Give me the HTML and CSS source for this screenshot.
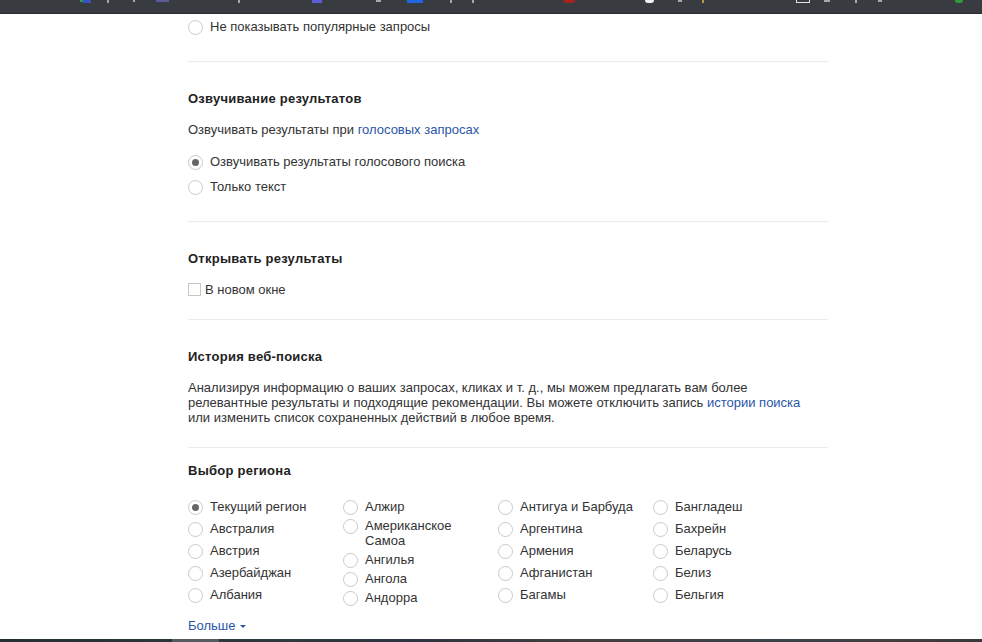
FILE: index.html
```html
<!DOCTYPE html>
<html lang="ru">
<head>
<meta charset="utf-8">
<title>Настройки поиска</title>
<link rel="stylesheet" href="styles.css">
</head>
<body>
<header class="topbar">
  <span class="frag f-green"></span><span class="frag f-blue1"></span><span class="frag f-t1"></span><span class="frag f-t2"></span>
  <span class="frag f-purple"></span><span class="frag f-t3"></span><span class="frag f-blue2"></span><span class="frag f-t4"></span>
  <span class="frag f-blue3"></span><span class="frag f-t5"></span><span class="frag f-t6"></span><span class="frag f-red"></span>
  <span class="frag f-white"></span><span class="frag f-t7"></span><span class="frag f-yellow"></span><span class="frag f-rect"></span>
  <span class="frag f-t8"></span><span class="frag f-t9"></span><span class="frag f-t10"></span><span class="frag f-green2"></span>
</header>
<main class="page">
  <section class="sec sec-first">
    <label class="opt"><span class="radio"></span>Не показывать популярные запросы</label>
  </section>
  <section class="sec sec-voice">
    <h2 class="title">Озвучивание результатов</h2>
    <p class="desc">Озвучивать результаты при <a class="link">голосовых запросах</a></p>
    <div class="stack">
      <label class="opt"><span class="radio on"></span>Озвучивать результаты голосового поиска</label>
      <label class="opt"><span class="radio"></span>Только текст</label>
    </div>
  </section>
  <section class="sec sec-open">
    <h2 class="title">Открывать результаты</h2>
    <label class="opt chk"><span class="box"></span>В новом окне</label>
  </section>
  <section class="sec sec-hist">
    <h2 class="title">История веб-поиска</h2>
    <p class="para">Анализируя информацию о ваших запросах, кликах и т. д., мы можем предлагать вам более релевантные результаты и подходящие рекомендации. Вы можете отключить запись <a class="link">истории поиска</a> или изменить список сохраненных действий в любое время.</p>
  </section>
  <section class="sec sec-region">
    <h2 class="title">Выбор региона</h2>
    <div class="regions">
      <div class="col col-a">
        <label class="reg"><span class="radio on"></span>Текущий регион</label>
        <label class="reg"><span class="radio"></span>Австралия</label>
        <label class="reg"><span class="radio"></span>Австрия</label>
        <label class="reg"><span class="radio"></span>Азербайджан</label>
        <label class="reg"><span class="radio"></span>Албания</label>
      </div>
      <div class="col col-b">
        <label class="reg tight"><span class="radio"></span>Алжир</label>
        <label class="reg tight"><span class="radio"></span><span>Американское Самоа</span></label>
        <label class="reg tight"><span class="radio"></span>Ангилья</label>
        <label class="reg tight"><span class="radio"></span>Ангола</label>
        <label class="reg tight"><span class="radio"></span>Андорра</label>
      </div>
      <div class="col col-c">
        <label class="reg"><span class="radio"></span>Антигуа и Барбуда</label>
        <label class="reg"><span class="radio"></span>Аргентина</label>
        <label class="reg"><span class="radio"></span>Армения</label>
        <label class="reg"><span class="radio"></span>Афганистан</label>
        <label class="reg"><span class="radio"></span>Багамы</label>
      </div>
      <div class="col col-d">
        <label class="reg"><span class="radio"></span>Бангладеш</label>
        <label class="reg"><span class="radio"></span>Бахрейн</label>
        <label class="reg"><span class="radio"></span>Беларусь</label>
        <label class="reg"><span class="radio"></span>Белиз</label>
        <label class="reg"><span class="radio"></span>Бельгия</label>
      </div>
    </div>
    <a class="link more">Больше<span class="caret"></span></a>
  </section>
</main>
<footer class="botbar"><span class="bot-seg"></span></footer>
</body>
</html>
```
FILE: styles.css
```css
* { box-sizing: border-box; }
html, body { margin: 0; height: 100%; }
body {
  width: 982px; height: 642px; overflow: hidden;
  background: #fff; color: #333;
  font-family: "Liberation Sans", Arial, sans-serif;
  font-size: 13px; line-height: 15px;
  display: flex; flex-direction: column;
}
.topbar { height: 14px; background: #383c40; border-bottom: 1px solid #2a2d30; flex: none; position: relative; }
.frag { position: absolute; top: 0; height: 2px; width: 2px; background: #a9a9a4; }
.f-green { left: 80px; width: 3px; height: 2px; background: #2f9e57; }
.f-blue1 { left: 83px; width: 8px; height: 3px; background: #3a4fc0; }
.f-t1 { left: 107px; height: 3px; }
.f-t2 { left: 133px; }
.f-purple { left: 156px; width: 13px; height: 2px; background: #5d5a9c; }
.f-t3 { left: 238px; height: 3px; }
.f-blue2 { left: 312px; width: 10px; height: 3px; background: #5a5fd8; }
.f-t4 { left: 376px; width: 5px; }
.f-blue3 { left: 407px; width: 16px; height: 3px; background: #1f66e0; }
.f-t5 { left: 450px; height: 3px; }
.f-t6 { left: 472px; height: 3px; }
.f-red { left: 563px; width: 12px; height: 3px; border-radius: 0 0 6px 6px; background: #a8201f; }
.f-white { left: 645px; width: 9px; height: 3px; border-radius: 0 0 5px 5px; background: #f2f2f2; }
.f-t7 { left: 678px; width: 4px; }
.f-yellow { left: 702px; width: 2px; height: 3px; background: #b89a4a; }
.f-rect { left: 796px; width: 14px; height: 3px; background: transparent; border: 1px solid #dfe3e6; border-top: 0; }
.f-t8 { left: 824px; width: 6px; }
.f-t9 { left: 855px; height: 3px; }
.f-t10 { left: 878px; width: 4px; }
.f-green2 { left: 955px; width: 8px; height: 3px; border-radius: 0 0 4px 4px; background: #2f9b3a; }
.botbar { height: 3px; flex: none; position: relative; background: linear-gradient(90deg, #24302f 0%, #2d3a40 30%, #2c3440 42%, #44403f 60%, #38424a 80%, #44403f 90%, #38383c 100%); }
.bot-seg { position: absolute; left: 172px; top: 0; width: 47px; height: 3px; background: #555b5d; }
.page { flex: 1; width: 640px; margin-left: 188px; overflow: hidden; }
.sec { border-bottom: 1px solid #ebebeb; }
.sec-first { height: 48px; padding-top: 5px; }
.sec-voice { height: 160px; padding-top: 29px; }
.sec-open { height: 98px; padding-top: 29px; }
.sec-hist { height: 128px; padding-top: 29px; }
.sec-region { border-bottom: 0; padding-top: 15px; }
.title { margin: 0; font-size: 13px; line-height: 15px; font-weight: 700; color: #222; letter-spacing: .25px; }
.desc { margin: 16px 0 0; }
.para { margin: 16px 0 0; max-width: 630px; }
.link { color: #2a56a8; }
.stack { margin-top: 17px; display: flex; flex-direction: column; gap: 10px; }
.opt { display: flex; align-items: center; gap: 7px; height: 15px; }
.chk { margin-top: 16px; gap: 4px; }
.radio { flex: none; width: 15px; height: 15px; margin-top: 1px; margin-bottom: -1px; border: 1px solid #c9c9c9; border-radius: 50%; background: #fff; display: inline-block; position: relative; }
.radio.on::after { content: ""; position: absolute; left: 3px; top: 3px; width: 7px; height: 7px; border-radius: 50%; background: #666; }
.box { flex: none; width: 13px; height: 13px; border: 1px solid #c6c6c6; background: #fff; display: inline-block; }
.regions { margin-top: 21px; display: flex; }
.col { display: flex; flex-direction: column; }
.col-a { width: 155px; }
.col-b { width: 155px; padding-right: 24px; }
.col-c { width: 155px; }
.col-d { width: 120px; }
.reg { display: flex; gap: 7px; height: 15px; margin-bottom: 7px; }
.reg.tight { margin-bottom: 4px; height: auto; }
.more { display: block; margin-top: 9px; }
.caret { display: inline-block; margin-left: 4px; vertical-align: 2px; border: 3px solid transparent; border-top-color: #2a56a8; border-bottom: 0; }
```
